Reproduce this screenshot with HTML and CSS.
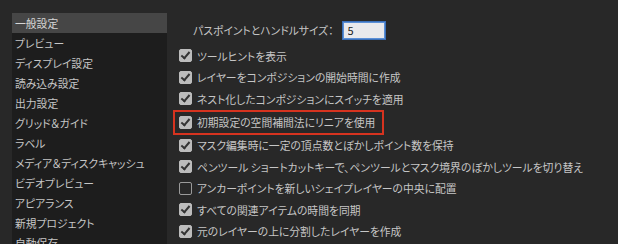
FILE: index.html
```html
<!DOCTYPE html>
<html lang="ja">
<head>
  <meta charset="UTF-8" />
  <title>環境設定</title>
  <link rel="stylesheet" href="styles.css">
</head>
<body>
  <div class="prefs">

    <!-- Category list -->
    <ul class="sidebar">
      <li class="selected">一般設定</li>
      <li>プレビュー</li>
      <li>ディスプレイ設定</li>
      <li>読み込み設定</li>
      <li>出力設定</li>
      <li>グリッド＆ガイド</li>
      <li>ラベル</li>
      <li>メディア＆ディスクキャッシュ</li>
      <li>ビデオプレビュー</li>
      <li>アピアランス</li>
      <li>新規プロジェクト</li>
      <li>自動保存</li>
    </ul>

    <!-- General settings -->
    <div class="panel">
      <div class="size-row">
        <span>パスポイントとハンドルサイズ：</span>
        <input type="text" class="num-input" value="5">
      </div>

      <label class="row"><span class="check on"></span>ツールヒントを表示</label>
      <label class="row"><span class="check on"></span>レイヤーをコンポジションの開始時間に作成</label>
      <label class="row"><span class="check on"></span>ネスト化したコンポジションにスイッチを適用</label>
      <label class="row marked"><span class="check on"></span>初期設定の空間補間法にリニアを使用</label>
      <label class="row"><span class="check on"></span>マスク編集時に一定の頂点数とぼかしポイント数を保持</label>
      <label class="row"><span class="check on"></span>ペンツール ショートカットキーで、ペンツールとマスク境界のぼかしツールを切り替え</label>
      <label class="row"><span class="check"></span>アンカーポイントを新しいシェイプレイヤーの中央に配置</label>
      <label class="row"><span class="check on"></span>すべての関連アイテムの時間を同期</label>
      <label class="row"><span class="check on"></span>元のレイヤーの上に分割したレイヤーを作成</label>
    </div>

  </div>
</body>
</html>
```

FILE: styles.css
```css
body {
  margin: 0;
  background: #282828;
  color: #c6c6c6;
  font-family: "Noto Sans CJK JP", "Noto Sans", sans-serif;
  font-size: 10.8px;
  font-feature-settings: "palt";
  height: 244px;
  overflow: hidden;
}

.prefs {
  display: flex;
  padding: 13px 0 0 12px;
}

.sidebar {
  list-style: none;
  margin: 0;
  padding: 0;
  width: 155px;
  height: 240px;
  background: #1d1d1d;
  flex-shrink: 0;
}

.sidebar li {
  height: 20px;
  line-height: 20px;
  padding-left: 3px;
  white-space: nowrap;
}

.sidebar li.selected {
  background: #464646;
  color: #d6d6d6;
}

.panel {
  padding-left: 12px;
  display: flex;
  flex-direction: column;
}

.size-row {
  display: flex;
  align-items: center;
  height: 18px;
  margin-top: 8px;
  margin-bottom: 6px;
  padding-left: 14px;
}

.num-input {
  width: 42px;
  height: 17px;
  box-sizing: border-box;
  margin-left: 9px;
  padding: 0 2px 0 4px;
  border: 1px solid #5b8fd6;
  background: #e9e9ec;
  color: #222;
  font-family: inherit;
  font-size: 11px;
  outline: none;
  box-shadow: 0 0 0 1px #3b6fb8;
}

.row {
  display: flex;
  align-items: center;
  height: 21.5px;
  white-space: nowrap;
}

.row.marked {
  align-self: flex-start;
  height: 21px;
  margin-left: -6px;
  padding: 0 7px 0 4px;
  border: 2px solid #d6331f;
}

.check {
  width: 13px;
  height: 13px;
  box-sizing: border-box;
  border: 1.5px solid #9a9a9a;
  border-radius: 2px;
  margin-right: 5px;
  position: relative;
}

.check.on {
  background: #bcbcbc;
  border-color: #bcbcbc;
}

.check.on::after {
  content: "";
  position: absolute;
  left: 3px;
  top: 0px;
  width: 3px;
  height: 7px;
  border: solid #333;
  border-width: 0 2px 2px 0;
  transform: rotate(40deg);
}
```
